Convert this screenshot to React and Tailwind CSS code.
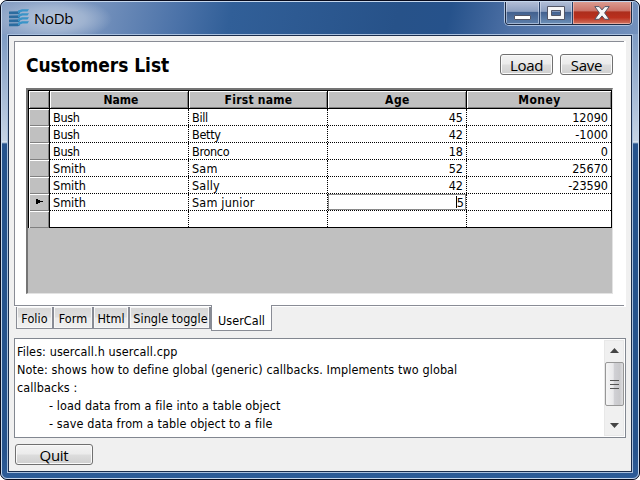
import React from "react";

const ROWS = [
  ["Bush", "Bill", "45", "12090"],
  ["Bush", "Betty", "42", "-1000"],
  ["Bush", "Bronco", "18", "0"],
  ["Smith", "Sam", "52", "25670"],
  ["Smith", "Sally", "42", "-23590"],
  ["Smith", "Sam junior", "5", ""],
  ["", "", "", ""],
];

const TAHOMA = "font-['DejaVu_Sans_Condensed','DejaVu_Sans',sans-serif] [font-stretch:condensed]";

function Logo() {
  return (
    <svg width="20" height="18" viewBox="0 0 20 18">
      {[0, 4, 8, 12].map((y) => (
        <g key={y}>
          <path d={`M0 ${y + 2.6} l11 -.4 v2 l-2 1 h-9 z`} fill="#2b6c9f" />
          <path d={`M9 ${y + 1.6} l4 -1.4 h7 l-1.5 2.4 h-5 l-4.5 1.6 z`} fill="#3a94c8" />
        </g>
      ))}
    </svg>
  );
}

function CaptionButtons() {
  return (
    <div className="flex h-[25px] w-[129px] rounded-b-[5px] border-x border-b border-[#b0c4e0]">
      <div className="flex h-6 w-full overflow-hidden rounded-b-[4px] border-x border-b border-[#1c2942]">
        <div className="flex w-[34px] justify-center border-r border-[#273f66] bg-[linear-gradient(#b5c0d8_0%,#8c9fc0_45%,#43618f_50%,#5d7eaa_100%)] pt-[14px] shadow-[inset_0_0_0_1px_rgba(220,230,245,0.55)]">
          <div className="h-[5px] w-[17px] rounded-[1px] border border-[#535666] bg-white" />
        </div>
        <div className="flex w-[33px] justify-center border-r border-[#273f66] bg-[linear-gradient(#b5c0d8_0%,#8c9fc0_45%,#43618f_50%,#6d90b8_100%)] shadow-[inset_0_0_0_1px_rgba(220,230,245,0.55)]">
          <svg width="18" height="14" viewBox="0 0 18 14" className="mt-[5px] shrink-0">
            <path fillRule="evenodd" d="M.5 .5h17v13h-17z M4.5 4.5h9v5h-9z" fill="#f7f7f8" stroke="#535666" />
          </svg>
        </div>
        <div className="flex flex-1 justify-center bg-[linear-gradient(#dda095_0%,#cb7368_42%,#ad2e1d_48%,#ba301e_72%,#d17663_100%)] shadow-[inset_0_0_0_1px_rgba(248,200,190,0.65)]">
          <svg width="16" height="14" viewBox="0 0 16 14" className="mt-[5px] shrink-0">
            <path
              d="M.8 .6h4.4L8 3.9 10.8 .6h4.4L10.6 6.9l4.6 6.4h-4.4L8 9.9 5.2 13.3H.8L5.4 6.9z"
              fill="#f7f7f8"
              stroke="#535666"
            />
          </svg>
        </div>
      </div>
    </div>
  );
}

function Button({ children, className }) {
  return (
    <button
      className={`h-[21px] rounded-[3px] border border-[#707070] bg-[linear-gradient(#f3f3f3_0%,#ebebeb_48%,#dddddd_52%,#cfcfcf_100%)] text-center font-['Open_Sans','Noto_Sans',sans-serif] text-[15px] leading-[18px] tracking-[-0.3px] text-black shadow-[inset_0_0_0_1px_#fafafa] [font-stretch:normal] ${className}`}
    >
      {children}
    </button>
  );
}

function HeadCell({ children, className = "" }) {
  return (
    <div
      className={`h-[17px] border-t border-l border-t-white border-l-white bg-[#c0c0c0] text-center text-[12px] leading-[16px] font-bold shadow-[inset_-1px_-1px_0_#808080] ${className}`}
    >
      {children}
    </div>
  );
}

function Table() {
  return (
    <div className="mx-[11px] h-[206px] border-t-2 border-r border-b border-l-2 border-t-[#747474] border-r-[#e3e3e3] border-b-[#e3e3e3] border-l-[#747474] bg-[#c0c0c0]">
      <div className="w-[584px] border-x border-t border-black bg-black">
        <div className="flex gap-px border-b border-black">
          <HeadCell className="w-5" />
          <HeadCell className="w-[138px] pl-[3px]">Name</HeadCell>
          <HeadCell className="w-[138px] tracking-[0.25px]">First name</HeadCell>
          <HeadCell className="w-[138px] tracking-[0.5px]">Age</HeadCell>
          <HeadCell className="flex-1 tracking-[0.5px]">Money</HeadCell>
        </div>
        {ROWS.map((row, i) => (
          <div key={i} className="flex h-[17px]">
            <div className="h-[17px] w-[21px] border-r border-b border-black">
              <HeadCell className="h-4 pt-[4px] pl-[6px]">
                {i === 5 && (
                  <svg width="7" height="5" viewBox="0 0 7 5" className="block" shapeRendering="crispEdges">
                    <path d="M0 0h2v1h2v1h3v1H4v1H2v1H0z" fill="#000" />
                  </svg>
                )}
              </HeadCell>
            </div>
            <div
              className={`flex h-[17px] flex-1 border-b border-black bg-white text-[12.5px] leading-[17px] ${i === 6 ? "border-solid" : "border-dotted"}`}
            >
              <div className={`w-[139px] border-r border-dotted border-black pl-[3px] ${i > 2 ? "tracking-[0px]" : "tracking-[-0.3px]"}`}>
                {row[0]}
              </div>
              <div className={`w-[139px] border-r border-dotted border-black pl-[3px] ${i > 2 ? "tracking-[0.2px]" : "tracking-[-0.3px]"}`}>
                {row[1]}
              </div>
              <div className="w-[139px] border-r border-dotted border-black">
                {i === 5 ? (
                  <div className="flex h-4 justify-end border border-[#8a8a8a] leading-[15px]">
                    <span className="my-px w-px bg-black" />
                    <span className="pr-[1px]">5</span>
                  </div>
                ) : (
                  <div className="pr-[3px] text-right">{row[2]}</div>
                )}
              </div>
              <div className="flex-1 pr-[3px] text-right">{row[3]}</div>
            </div>
          </div>
        ))}
      </div>
    </div>
  );
}

function Tab({ label, className }) {
  return (
    <div
      className={`h-[22px] border-r-2 border-b border-[#898c95] bg-[linear-gradient(#d6d6d6_0%,#dedede_48%,#ebebeb_52%,#f0f0f0_100%)] text-center leading-[24px] whitespace-nowrap shadow-[inset_0_0_0_1px_#f7f7f7] ${className}`}
    >
      {label}
    </div>
  );
}

export default function App() {
  return (
    <div className="h-[480px] w-[640px] overflow-hidden bg-white">
      <div className={`h-full w-full rounded-[7px] border border-[#080b1c] bg-[#26538d] text-black ${TAHOMA}`}>
        <div className="h-full w-full overflow-hidden rounded-[6px] border border-[#c5d7ed] bg-[linear-gradient(#7e9bc4_0px,#829ec5_40px,#c6d3e4_139px,#e5edf5_140px,#26538d_142px,#26538d_450px,#2d5c98_100%)]">
          <div className="flex h-8 justify-between bg-[radial-gradient(ellipse_60px_22px_at_50px_17px,#b7c5da_0%,#9fb3d0_55%,transparent_100%),linear-gradient(102deg,#8aa1c5_0%,#7592bd_15%,#4b72a8_28%,#315f98_36%,#275289_62%,#26528b_70%,#4d70a5_80%,#7391bd_100%)]">
            <div className="flex pt-[7px] pl-[7px]">
              <Logo />
              <span className="ml-[5px] font-['Open_Sans','Noto_Sans',sans-serif] text-[15px] leading-[19px] tracking-[-0.3px] [font-stretch:normal]">
                NoDb
              </span>
            </div>
            <div className="mr-[5px] -mt-px">
              <CaptionButtons />
            </div>
          </div>
          <div className="mx-[5px] h-[439px] border border-[#a9c0de]">
            <div className="h-full border border-[#1b2d4c] bg-[#f0f0f0] px-[5px] pt-[5px]">
              <div className="h-[266px] w-[612px] bg-white">
                <div className="h-[265px] w-[610px] border-t border-b border-l border-[#898c95]">
                  <div className="flex h-[46px] pt-[12px] pl-[11px]">
                    <h1 className="w-[474px] text-[19px] leading-[23px] font-bold tracking-[-0.05px]">Customers List</h1>
                    <Button className="w-[53px]">Load</Button>
                    <Button className="ml-[7px] w-[53px]">Save</Button>
                  </div>
                  <Table />
                </div>
              </div>
              <div className="flex h-[31px] pl-[2px] text-[12.5px] tracking-[0.05px]">
                <Tab label="Folio" className="w-[38px] border-l" />
                <Tab label="Form" className="w-10" />
                <Tab label="Html" className="w-9" />
                <Tab label="Single toggle" className="w-[81px] border-r-0 pl-[2px]" />
                <div className="relative -top-[2px] h-[26px] w-[61px] border-x border-b border-[#898c95] bg-white pt-[7px] text-center leading-[17px]">
                  UserCall
                </div>
              </div>
              <div className="flex h-[100px] w-[612px] justify-between border border-[#828790] bg-white p-px">
                <div className="pt-[3px] pl-[1px] text-[12.5px] leading-[18px] tracking-[0.1px] whitespace-pre">
                  <div>Files: usercall.h usercall.cpp</div>
                  <div>Note: shows how to define global (generic) callbacks. Implements two global</div>
                  <div>callbacks :</div>
                  <div className="pl-8">- load data from a file into a table object</div>
                  <div className="pl-8">- save data from a table object to a file</div>
                </div>
                <div className="flex w-5 flex-col items-center border border-[#e8e8e8] bg-[#f0f0f0]">
                  <svg width="9" height="5" viewBox="0 0 9 5" className="mt-[7px] mb-[9px]">
                    <path d="M0 5L4.5 0 9 5z" fill="#444" />
                  </svg>
                  <div className="flex h-11 w-[19px] flex-col items-center justify-center gap-[3px] rounded-[2px] border border-[#979797] bg-[linear-gradient(90deg,#f5f5f5_0%,#e9e9eb_42%,#d0d0d4_50%,#c9c9cc_80%,#dedee0_100%)]">
                    <span className="h-px w-[9px] bg-[#555]" />
                    <span className="h-px w-[9px] bg-[#555]" />
                    <span className="h-px w-[9px] bg-[#555]" />
                  </div>
                  <svg width="9" height="5" viewBox="0 0 9 5" className="mt-[17px]">
                    <path d="M0 0L4.5 5 9 0z" fill="#444" />
                  </svg>
                </div>
              </div>
              <Button className="mt-[6px] ml-px block w-[78px]">Quit</Button>
            </div>
          </div>
        </div>
      </div>
    </div>
  );
}
